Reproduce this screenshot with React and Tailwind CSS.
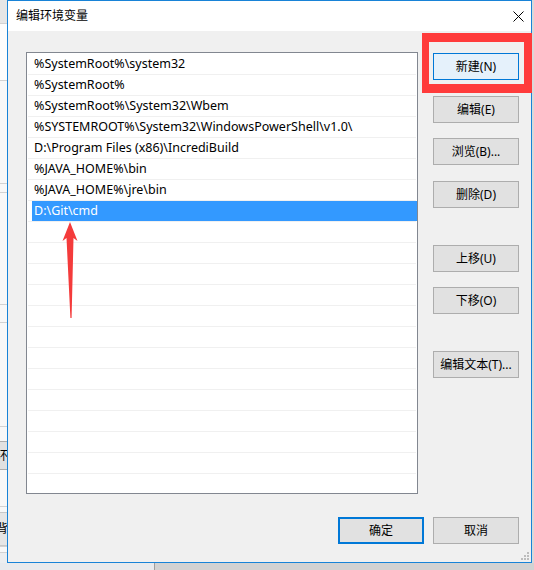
import React from "react";

const rows = [
  "%SystemRoot%\\system32",
  "%SystemRoot%",
  "%SystemRoot%\\System32\\Wbem",
  "%SYSTEMROOT%\\System32\\WindowsPowerShell\\v1.0\\",
  "D:\\Program Files (x86)\\IncrediBuild",
  "%JAVA_HOME%\\bin",
  "%JAVA_HOME%\\jre\\bin",
  "D:\\Git\\cmd",
];

function Btn({ children, className = "", primary = false, focused = false }) {
  let cls =
    "w-[86px] h-[27px] flex items-center justify-center text-[12px] text-black ";
  if (focused) cls += "border border-[#0078d7] bg-[#e5f1fb] ";
  else if (primary) cls += "border-2 border-[#0078d7] bg-[#e1e1e1] ";
  else cls += "border border-[#adadad] bg-[#e1e1e1] ";
  return <div className={cls + className}>{children}</div>;
}

function Line() {
  return <div className="h-[1px] bg-[#d2d2d2]" />;
}

export default function App() {
  const all = [];
  for (let i = 0; i < 21; i++) all.push(rows[i] ?? "");
  return (
    <div className="relative w-[534px] h-[570px] overflow-hidden flex flex-col bg-[#d4d4d4] font-['Noto_Sans','Noto_Sans_CJK_SC',sans-serif]">
      <div className="flex h-[563px]">
        {/* background window strip */}
        <div className="w-[7px] flex flex-col bg-[#f8f8f8] text-[12px] text-black">
          <div className="h-[23px] bg-[#e6e6e6]" />
          <Line />
          <div className="h-[56px] bg-[#fcfcfc]" />
          <Line />
          <div className="h-[102px]" />
          <Line />
          <div className="h-[8px]" />
          <Line />
          <div className="h-[111px]" />
          <Line />
          <div className="h-[17px]" />
          <Line />
          <div className="h-[103px]" />
          <Line />
          <div className="h-[14px]" />
          <div className="h-[29px] bg-[#e1e1e1] border-y border-[#adadad] overflow-hidden flex items-center justify-end">
            <span className="shrink-0 -mr-[1px]">环</span>
          </div>
          <div className="h-[36px]" />
          <Line />
          <div className="h-[5px]" />
          <div className="h-[34px] bg-[#e6e6e6] border-y border-[#c8c8c8] overflow-hidden flex items-center justify-end">
            <span className="shrink-0 -mr-[1px]">背</span>
          </div>
          <Line />
          <div className="h-[5px]" />
          <Line />
          <div className="h-[10px] bg-[#eceef0]" />
        </div>

        {/* dialog */}
        <div className="relative w-[525px] h-[563px] border border-[#1883d7] flex flex-col bg-[#f0f0f0]">
          <div className="h-[30px] bg-white flex items-center pl-[8px] pr-[7px]">
            <span className="text-[12px] text-black flex-1">编辑环境变量</span>
            <svg width="11" height="11" viewBox="0 0 11 11" className="mt-[1px]">
              <path d="M0.5 0.5 L10.5 10.5 M10.5 0.5 L0.5 10.5" stroke="#000" strokeWidth="1" />
            </svg>
          </div>
          <div className="flex-1 flex flex-col pl-[18px] pr-[12px] pt-[21px]">
            <div className="flex">
              <div className="w-[392px] h-[442px] border border-[#828790] bg-white overflow-hidden pt-[1px] text-[12.5px] text-black">
                {all.map((t, i) => {
                  const sel = i === 7;
                  return (
                    <div key={i} className="h-[21px] mx-[1px] border-b border-[#f0f0f0] flex">
                      <div
                        className={
                          "h-[20px] ml-[4px] -mr-[1px] flex-1 flex items-center pl-[2px] pt-[1px] whitespace-nowrap " +
                          (sel ? "bg-[#3399ff] text-white" : "")
                        }
                      >
                        {t}
                      </div>
                    </div>
                  );
                })}
              </div>
              <div className="ml-[15px] flex flex-col">
                <Btn focused className="mt-[1px]">新建(N)</Btn>
                <Btn className="mt-[16px]">编辑(E)</Btn>
                <Btn className="mt-[15px]">浏览(B)...</Btn>
                <Btn className="mt-[16px]">删除(D)</Btn>
                <Btn className="mt-[37px]">上移(U)</Btn>
                <Btn className="mt-[15px]">下移(O)</Btn>
                <Btn className="mt-[37px]">编辑文本(T)...</Btn>
              </div>
            </div>
            <div className="mt-[23px] flex justify-end gap-[9px]">
              <Btn primary>确定</Btn>
              <Btn>取消</Btn>
            </div>
          </div>
          {/* resize grip */}
          <svg width="9" height="9" viewBox="0 0 9 9" className="absolute right-[1px] bottom-[1px]">
            <g fill="#bcbcbc">
              <rect x="6" y="0" width="2" height="2" />
              <rect x="3" y="3" width="2" height="2" />
              <rect x="6" y="3" width="2" height="2" />
              <rect x="0" y="6" width="2" height="2" />
              <rect x="3" y="6" width="2" height="2" />
              <rect x="6" y="6" width="2" height="2" />
            </g>
          </svg>
        </div>
        <div className="w-[2px] bg-[#d9d9d9]" />
      </div>
      <div className="h-[7px] flex">
        <div className="w-[155px] bg-[#e8eaed] border-r border-[#9e9e9e]" />
        <div className="flex-1 bg-[#d2d2d2]" />
      </div>

      {/* annotations */}
      <div className="absolute left-[422px] top-[33px] w-[110px] h-[60px] border-l-[7px] border-r-[8px] border-y-[9px] border-[#ff3b3b]" />
      <svg width="534" height="570" className="absolute left-0 top-0 pointer-events-none">
        <polygon
          points="70,222 77.5,241 73.5,238 71.6,318 70.4,318 66.5,238 62.5,241"
          fill="#f43b3b"
        />
      </svg>
    </div>
  );
}
